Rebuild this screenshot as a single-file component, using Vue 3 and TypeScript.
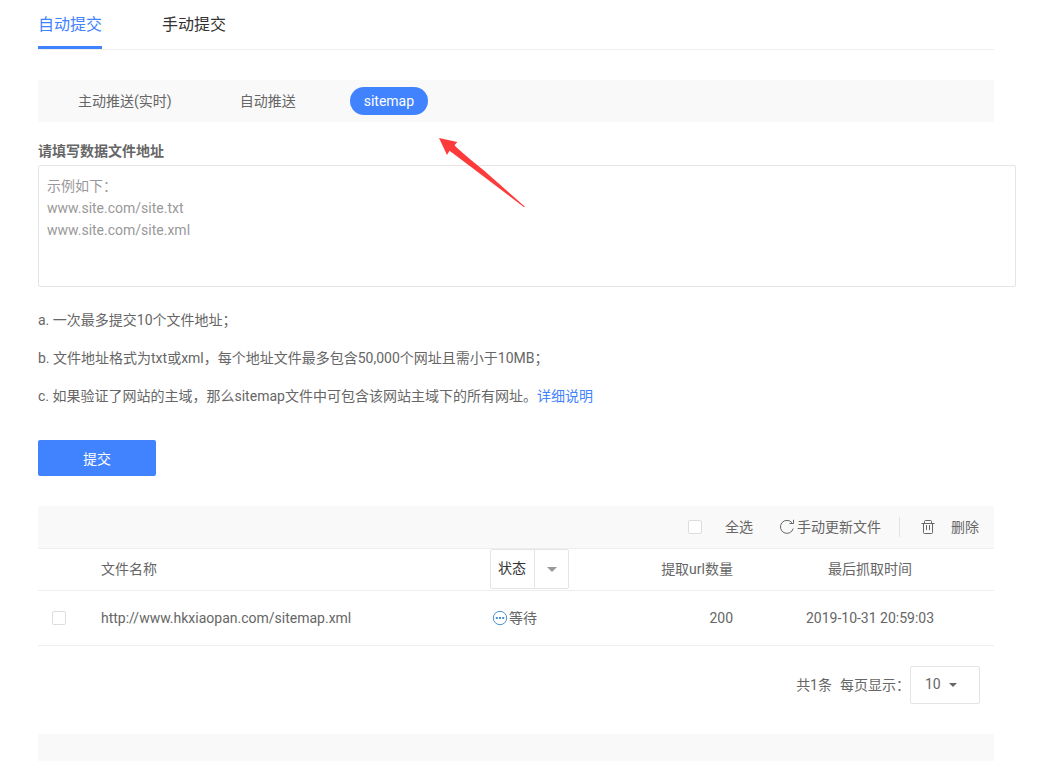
<script setup lang="ts">
import { ref } from 'vue'

interface FileRow {
  url: string
  status: string
  count: number
  time: string
  checked: boolean
}

const tabs: string[] = ['自动提交', '手动提交']
const modes: string[] = ['主动推送(实时)', '自动推送', 'sitemap']
const activeTab = ref(0)
const activeMode = ref(2)
const addresses = ref('')
const placeholder = '示例如下：\nwww.site.com/site.txt\nwww.site.com/site.xml'
const allChecked = ref(false)
const status = ref('状态')
const pageSize = ref('10')
const rows = ref<FileRow[]>([
  {
    url: 'http://www.hkxiaopan.com/sitemap.xml',
    status: '等待',
    count: 200,
    time: '2019-10-31 20:59:03',
    checked: false,
  },
])

function toggleAll(): void {
  rows.value.forEach((row) => (row.checked = allChecked.value))
}
</script>

<template>
  <main class="page">
    <nav class="tabs">
      <button
        v-for="(tab, i) in tabs"
        :key="tab"
        type="button"
        class="tab"
        :class="{ active: i === activeTab }"
        @click="activeTab = i"
      >{{ tab }}</button>
    </nav>

    <nav class="modes">
      <button
        v-for="(mode, i) in modes"
        :key="mode"
        type="button"
        class="mode"
        :class="{ active: i === activeMode }"
        @click="activeMode = i"
      >{{ mode }}</button>
      <svg class="pointer" width="88" height="71" viewBox="0 0 88 71" aria-hidden="true">
        <path d="M0 0 L18.3 4 L15.5 7.2 Q22 14 45 32.5 L86 68.8 L84.8 69 L42 36.5 Q28 26 10.5 12.8 L8 17 Z" fill="#fd3b3b" />
      </svg>
    </nav>

    <form class="form" @submit.prevent>
      <label class="form-label" for="addresses">请填写数据文件地址</label>
      <textarea id="addresses" v-model="addresses" class="addresses" :placeholder="placeholder"></textarea>
      <p class="note">a. 一次最多提交10个文件地址；</p>
      <p class="note">b. 文件地址格式为txt或xml，每个地址文件最多包含50,000个网址且需小于10MB；</p>
      <p class="note">
        c. 如果验证了网站的主域，那么sitemap文件中可包含该网站主域下的所有网址。<a href="#">详细说明</a>
      </p>
      <button type="submit" class="submit">提交</button>
    </form>

    <section>
      <div class="toolbar">
        <label class="select-all">
          <input v-model="allChecked" type="checkbox" class="check" @change="toggleAll" />
          <span>全选</span>
        </label>
        <button type="button" class="tool refresh">
          <svg width="16" height="16" viewBox="0 0 16 16" fill="none" stroke="#666" aria-hidden="true">
            <path d="M13 3.8 A6.5 6.5 0 1 0 14.2 9.6" />
            <path d="M14.5 0.8 V4.5 H10.5" />
          </svg>
          <span>手动更新文件</span>
        </button>
        <button type="button" class="tool remove">
          <svg width="14" height="16" viewBox="0 0 14 16" fill="none" stroke="#666" aria-hidden="true">
            <path d="M0.5 4.5 H13.5 M3.5 4.5 V2.5 Q3.5 1.5 4.5 1.5 H9.5 Q10.5 1.5 10.5 2.5 V4.5 M2.5 4.5 V13.5 Q2.5 14.5 3.5 14.5 H10.5 Q11.5 14.5 11.5 13.5 V4.5 M5.5 6 V11 M8.5 6 V11" />
          </svg>
          <span>删除</span>
        </button>
      </div>

      <table class="files">
        <colgroup>
          <col class="col-check" />
          <col />
          <col class="col-status" />
          <col class="col-count" />
          <col class="col-time" />
        </colgroup>
        <thead>
          <tr>
            <td></td>
            <th scope="col">文件名称</th>
            <th scope="col">
              <div class="status-filter">
                <select v-model="status" aria-label="状态">
                  <option>状态</option>
                  <option>等待</option>
                </select>
                <span class="status-arrow"><i class="caret"></i></span>
              </div>
            </th>
            <th scope="col" class="count">提取url数量</th>
            <th scope="col" class="time">最后抓取时间</th>
          </tr>
        </thead>
        <tbody>
          <tr v-for="row in rows" :key="row.url">
            <td class="pick"><input v-model="row.checked" type="checkbox" class="check" :aria-label="row.url" /></td>
            <td>{{ row.url }}</td>
            <td>
              <span class="state">
                <svg width="16" height="16" viewBox="0 0 16 16" aria-hidden="true">
                  <circle cx="8" cy="8" r="6.7" fill="none" stroke="#4b8fd0" />
                  <path d="M3.8 7h2v2h-2z M7 7h2v2h-2z M10.2 7h2v2h-2z" fill="#4b8fd0" />
                </svg>
                <span>{{ row.status }}</span>
              </span>
            </td>
            <td class="count">{{ row.count }}</td>
            <td class="time">{{ row.time }}</td>
          </tr>
        </tbody>
      </table>

      <div class="pager">
        <span>共{{ rows.length }}条</span>
        <label for="page-size">每页显示：</label>
        <div class="page-size">
          <select id="page-size" v-model="pageSize">
            <option>10</option>
            <option>20</option>
            <option>50</option>
          </select>
          <i class="caret"></i>
        </div>
      </div>
    </section>

    <footer class="footer"></footer>
  </main>
</template>

<style>
body {
  background: #fff;
}
</style>

<style scoped>
.page,
.page button,
.page select,
.page textarea {
  font-family: Roboto, "Noto Sans CJK SC", sans-serif;
  font-size: 14px;
  color: #666;
}
.page {
  box-sizing: border-box;
  min-height: 100vh;
  display: flex;
  flex-direction: column;
  padding: 0 63px 0 38px;
  line-height: 22px;
}
.page * {
  box-sizing: border-box;
}
button {
  margin: 0;
  padding: 0;
  border: 0;
  background: none;
  cursor: pointer;
}
.tabs {
  display: flex;
  gap: 60px;
  height: 50px;
  border-bottom: 1px solid #eee;
}
.page .tab {
  height: 49px;
  border-top: 3px solid transparent;
  border-bottom: 3px solid transparent;
  font-size: 16px;
  line-height: 43px;
  color: #333;
}
.page .tab.active {
  color: #4182ff;
  border-bottom-color: #4182ff;
}
.modes {
  position: relative;
  display: flex;
  align-items: center;
  gap: 40px;
  height: 42px;
  margin-top: 30px;
  padding-left: 26px;
  background: #f9f9f9;
}
.mode {
  height: 28px;
  padding: 0 14px;
  border-radius: 14px;
  line-height: 28px;
}
.page .mode.active {
  background: #4182ff;
  color: #fff;
}
.pointer {
  position: absolute;
  left: 401px;
  top: 58px;
}
.form {
  margin-top: 18px;
}
.form-label {
  display: block;
  height: 25px;
  font-weight: bold;
}
.page .addresses {
  display: block;
  width: calc(100% + 22px);
  height: 122px;
  margin: 0 0 14px;
  padding: 9px 8px;
  border: 1px solid #e4e4e4;
  border-radius: 2px;
  line-height: 22px;
  resize: none;
}
.addresses::placeholder {
  color: #999;
  opacity: 1;
}
.note {
  margin: 0;
  line-height: 38px;
}
.note a {
  color: #4182ff;
  text-decoration: none;
}
.page .submit {
  display: block;
  width: 118px;
  height: 36px;
  margin-top: 25px;
  border-radius: 2px;
  background: #4182ff;
  color: #fff;
}
.toolbar {
  display: flex;
  align-items: center;
  justify-content: flex-end;
  height: 43px;
  margin-top: 30px;
  padding-right: 15px;
  border-bottom: 1px solid #eee;
  background: #f9f9f9;
}
.check {
  appearance: none;
  display: block;
  width: 14px;
  height: 14px;
  margin: 0;
  border: 1px solid #ddd;
  border-radius: 2px;
  background: #fff;
}
.check:checked {
  background: #4182ff;
}
.select-all {
  display: flex;
  align-items: center;
  gap: 23px;
  margin-right: 26px;
}
.tool {
  display: flex;
  align-items: center;
  line-height: 20px;
}
.refresh {
  gap: 2px;
}
.remove {
  gap: 16px;
  margin-left: 18px;
  padding-left: 21px;
  border-left: 1px solid #e4e4e4;
}
.files {
  width: 100%;
  table-layout: fixed;
  border-collapse: separate;
  border-spacing: 0;
}
.col-check {
  width: 63px;
}
.col-status,
.col-count {
  width: 128px;
}
.col-time {
  width: 248px;
}
th,
td {
  height: 55px;
  padding: 0;
  border-bottom: 1px solid #eee;
  font-weight: normal;
  text-align: left;
}
thead th,
thead td {
  height: 42px;
  padding-bottom: 1px;
}
.count {
  padding-right: 13px;
  text-align: right;
}
.time {
  text-align: center;
}
.pick {
  padding-left: 14px;
}
.status-filter {
  position: relative;
  width: 79px;
  height: 40px;
}
select {
  appearance: none;
  width: 100%;
  height: 100%;
  margin: 0;
  border: 1px solid #e4e4e4;
  border-radius: 2px;
  background: #fff;
}
.page .status-filter select {
  padding: 0 42px 2px 7px;
  color: #333;
}
.status-arrow {
  position: absolute;
  top: 1px;
  right: 1px;
  bottom: 1px;
  width: 34px;
  display: flex;
  align-items: center;
  justify-content: center;
  border-left: 1px solid #e4e4e4;
  color: #999;
  pointer-events: none;
}
.caret {
  border: 5px solid transparent;
  border-top-color: currentColor;
  border-bottom: 0;
}
.state {
  display: flex;
  align-items: center;
  gap: 1px;
  padding-left: 2px;
}
.pager {
  display: flex;
  align-items: center;
  justify-content: flex-end;
  gap: 8px;
  margin: 20px 14px 30px 0;
}
.pager label {
  margin-right: -8px;
}
.page-size {
  position: relative;
  width: 70px;
  height: 38px;
}
.page-size select {
  padding: 0 30px 2px 14px;
}
.page-size .caret {
  position: absolute;
  top: 17px;
  right: 23px;
  border-width: 4px;
  border-bottom-width: 0;
  pointer-events: none;
}
.footer {
  flex: 1;
  min-height: 27px;
  background: #f9f9f9;
}
</style>
